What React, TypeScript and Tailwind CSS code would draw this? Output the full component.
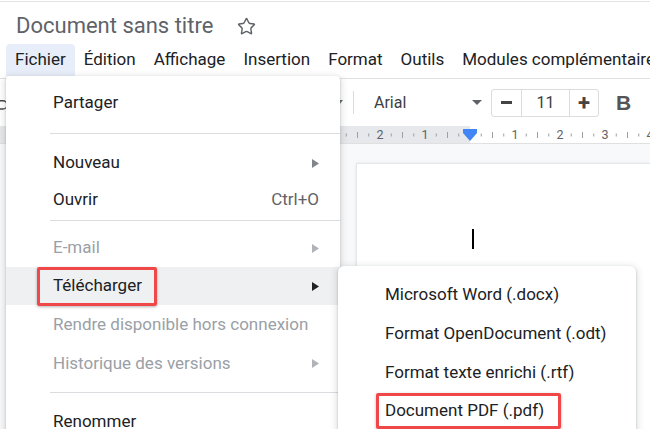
import { Star, Undo2 } from "lucide-react";

const menus = ["Fichier", "Édition", "Affichage", "Insertion", "Format", "Outils", "Modules complémentaires"];

function Arrow({ color }: { color: string }) {
  return (
    <svg width="7" height="9" viewBox="0 0 7 9" className="shrink-0">
      <path d="M0 0 L7 4.5 L0 9 Z" fill={color} />
    </svg>
  );
}

function Ruler() {
  const ticks = [];
  for (let k = -20; k <= 18; k++) {
    const x = 470 + k * 11.25;
    if (k === 0) continue;
    if (k % 4 === 0) {
      ticks.push(
        <text key={k} x={x} y={13} textAnchor="middle" fontSize="12.5" fill="#5f6368" fontFamily="Roboto, sans-serif">
          {Math.abs(k / 4)}
        </text>
      );
    } else {
      const h = k % 2 === 0 ? 6 : 3;
      ticks.push(<rect key={k} x={x - 0.5} y={9 - h / 2} width={1} height={h} fill="#9aa0a6" />);
    }
  }
  return (
    <svg width="650" height="17" viewBox="0 0 650 17" className="block">
      <rect x="0" y="0" width="470" height="17" fill="#e6e8eb" />
      <rect x="470" y="0" width="180" height="17" fill="#ffffff" />
      {ticks}
      <rect x="463" y="3" width="14" height="4" fill="#4285f4" />
      <path d="M463 7 L477 7 L470 15 Z" fill="#4285f4" />
    </svg>
  );
}

export default function App() {
  return (
    <div className="relative w-[650px] h-[429px] overflow-hidden bg-white font-['Roboto',sans-serif] text-[#202124]">
      <div className="flex flex-col h-full pt-px">
        <div className="border-t border-[#e3e3e3]" />
        {/* title */}
        <div className="h-[42px] flex items-center pl-4 pt-[5px]">
          <span className="text-[22px] text-[#5f6368] leading-none">Document sans titre</span>
          <Star size={19} strokeWidth={1.8} className="ml-[24px] mt-[2px] text-[#5f6368]" />
        </div>
        {/* menu bar */}
        <div className="h-[34px] flex pl-[6px]">
          {menus.map((m, i) => (
            <div
              key={m}
              className={`h-[32px] px-[9px] flex items-center text-[17px] whitespace-nowrap rounded-t-[4px] ${i === 0 ? "bg-[#e8eef9]" : ""}`}
            >
              {m}
            </div>
          ))}
        </div>
        {/* toolbar */}
        <div className="h-[48px] border-t border-[#e0e0e0] flex items-center *:shrink-0">
          <Undo2 size={18} strokeWidth={2} className="-ml-[8px] text-[#444]" />
          <div className="w-[337px]" />
          <svg width="8" height="5" viewBox="0 0 8 5" className="-ml-[12px]">
            <path d="M0 0 L8 0 L4 5 Z" fill="#5f6368" />
          </svg>
          <div className="ml-[10px] w-px h-[23px] bg-[#dadce0]" />
          <span className="ml-[20px] text-[16px] text-[#3c4043] w-[93px]">Arial</span>
          <svg width="10" height="5" viewBox="0 0 10 5" className="ml-[5px]">
            <path d="M0 0 L10 0 L5 5 Z" fill="#5f6368" />
          </svg>
          <div className="ml-[9px] h-[28px] flex border border-[#dadce0] rounded-[3px] text-[#3c4043]">
            <div className="w-[30px] flex items-center justify-center border-r border-[#dadce0]">
              <div className="w-[11px] h-[2.5px] bg-[#444]" />
            </div>
            <div className="w-[47px] flex items-center justify-center text-[16px]">11</div>
            <div className="w-[29px] flex items-center justify-center border-l border-[#dadce0] text-[22px] font-bold leading-none text-[#444]">
              +
            </div>
          </div>
          <span className="ml-[17px] text-[21px] font-bold text-[#555] font-['Liberation_Sans',sans-serif]">B</span>
          <span className="ml-[19px] text-[21px] font-bold italic text-[#555]">I</span>
        </div>
        {/* ruler */}
        <div className="h-[18px] border-b border-[#e0e0e0]">
          <Ruler />
        </div>
        {/* document area */}
        <div className="flex-1 bg-[#f8f9fa] pl-[356px] pt-[19px]">
          <div className="h-full bg-white border-l border-t border-[#e4e6e9] shadow-[0_0_3px_rgba(0,0,0,0.08)] pl-[115px] pt-[65px]">
            <div className="w-[2px] h-[20px] bg-black" />
          </div>
        </div>
      </div>

      {/* Fichier menu */}
      <div className="absolute left-[6px] top-[76px] w-[334px] h-[380px] bg-white rounded-[4px] shadow-[0_2px_6px_2px_rgba(60,64,67,0.15),0_1px_2px_rgba(60,64,67,0.3)] pt-[8px] text-[17px]">
        <div className="h-[38px] flex items-center pl-[47px]">Partager</div>
        <div className="py-[11px] pl-[44px]">
          <div className="h-px bg-[#dadce0]" />
        </div>
        <div className="h-[36px] flex items-center pl-[47px] pr-[21px]">
          <span className="flex-1">Nouveau</span>
          <Arrow color="#80868b" />
        </div>
        <div className="h-[37px] flex items-center pl-[47px] pr-[21px]">
          <span className="flex-1">Ouvrir</span>
          <span className="text-[#5f6368]">Ctrl+O</span>
        </div>
        <div className="pt-[2px] pb-[8px] pl-[44px]">
          <div className="h-px bg-[#dadce0]" />
        </div>
        <div className="h-[38px] flex items-center pl-[47px] pr-[21px] text-[#9aa0a6]">
          <span className="flex-1">E-mail</span>
          <Arrow color="#b0b4b9" />
        </div>
        <div className="relative h-[38px] flex items-center pl-[47px] pr-[21px] bg-[#eff0f2]">
          <span className="flex-1">Télécharger</span>
          <Arrow color="#202124" />
          <div className="absolute left-[31px] top-0 w-[120px] h-[39px] border-[3px] border-[#f04848] rounded-[2px] shadow-[0_1px_3px_rgba(0,0,0,0.3)]" />
        </div>
        <div className="h-[39px] flex items-center pl-[47px] text-[#9aa0a6]">Rendre disponible hors connexion</div>
        <div className="h-[39px] flex items-center pl-[47px] pr-[21px] text-[#9aa0a6]">
          <span className="flex-1">Historique des versions</span>
          <Arrow color="#b0b4b9" />
        </div>
        <div className="pt-[9px] pb-[11px] pl-[44px]">
          <div className="h-px bg-[#dadce0]" />
        </div>
        <div className="h-[36px] flex items-center pl-[47px]">Renommer</div>
      </div>

      {/* Télécharger submenu */}
      <div className="absolute left-[338px] top-[266px] w-[298px] h-[200px] bg-white rounded-[6px] shadow-[0_2px_6px_2px_rgba(60,64,67,0.15),0_1px_2px_rgba(60,64,67,0.3)] pt-[10px] text-[17px]">
        <div className="h-[38px] flex items-center pl-[47px]">Microsoft Word (.docx)</div>
        <div className="h-[39px] flex items-center pl-[47px]">Format OpenDocument (.odt)</div>
        <div className="h-[39px] flex items-center pl-[47px]">Format texte enrichi (.rtf)</div>
        <div className="relative h-[38px] flex items-center pl-[47px]">
          Document PDF (.pdf)
          <div className="absolute left-[38px] top-[1px] w-[185px] h-[36px] border-[3px] border-[#f04848] rounded-[2px] shadow-[0_1px_3px_rgba(0,0,0,0.3)]" />
        </div>
      </div>
    </div>
  );
}
